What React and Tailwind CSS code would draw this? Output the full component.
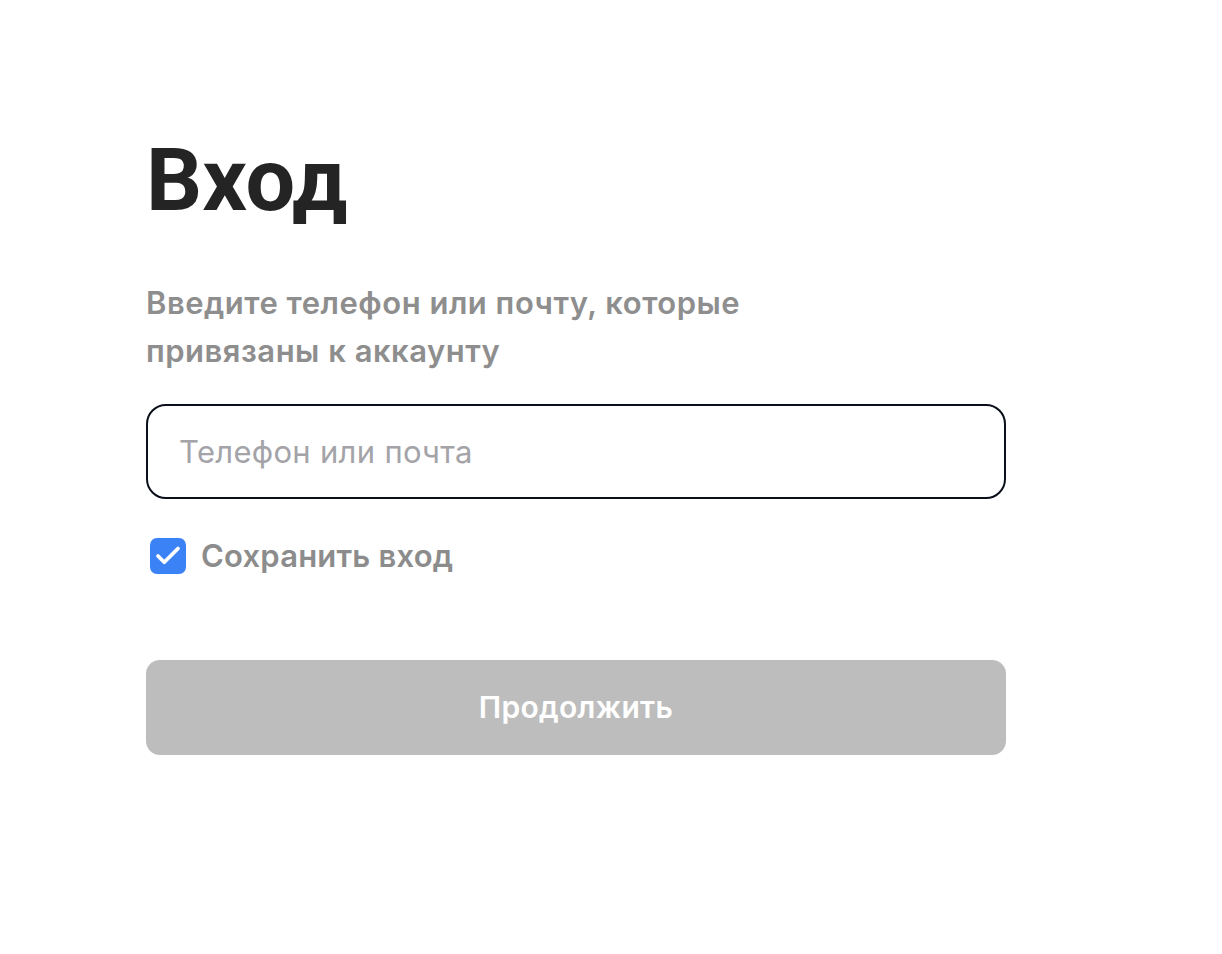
import { Check } from 'lucide-react';

export default function App() {
  return (
    <div className="min-h-screen bg-white font-['Inter','Noto_Sans',sans-serif]">
      <div className="w-[860px] ml-[146px] pt-[128px]">
        {/* Title */}
        <h1 className="font-['Roboto',sans-serif] text-[88px] leading-[104px] font-bold text-[#242424]">Вход</h1>

        {/* Hint */}
        <p className="mt-[47px] text-[31px] leading-[48px] font-semibold tracking-[0.5px] text-[#8e8e8e]">
          Введите телефон или почту, которые
          <br />
          привязаны к аккаунту
        </p>

        {/* Input */}
        <input
          type="text"
          placeholder="Телефон или почта"
          className="mt-[29px] block w-full h-[95px] px-[31px] border-2 border-[#0b0f1a] rounded-[20px] text-[31px] tracking-[0.3px] text-[#242424] placeholder:text-[#a3a3a8] outline-none"
        />

        {/* Remember */}
        <label className="mt-[39px] flex items-center gap-[15px] cursor-pointer">
          <span className="ml-[4px] w-[36px] h-[36px] rounded-[7px] bg-[#3b82f6] flex items-center justify-center">
            <Check className="w-[30px] h-[30px] text-white" strokeWidth={3} />
          </span>
          <span className="text-[31px] leading-[36px] font-semibold tracking-[0.2px] text-[#8c8c8c]">Сохранить вход</span>
        </label>

        {/* Submit */}
        <button className="mt-[86px] block w-full h-[95px] rounded-[14px] bg-[#bdbdbd] text-white text-[30px] font-semibold tracking-[0.3px]">
          Продолжить
        </button>
      </div>
    </div>
  );
}
